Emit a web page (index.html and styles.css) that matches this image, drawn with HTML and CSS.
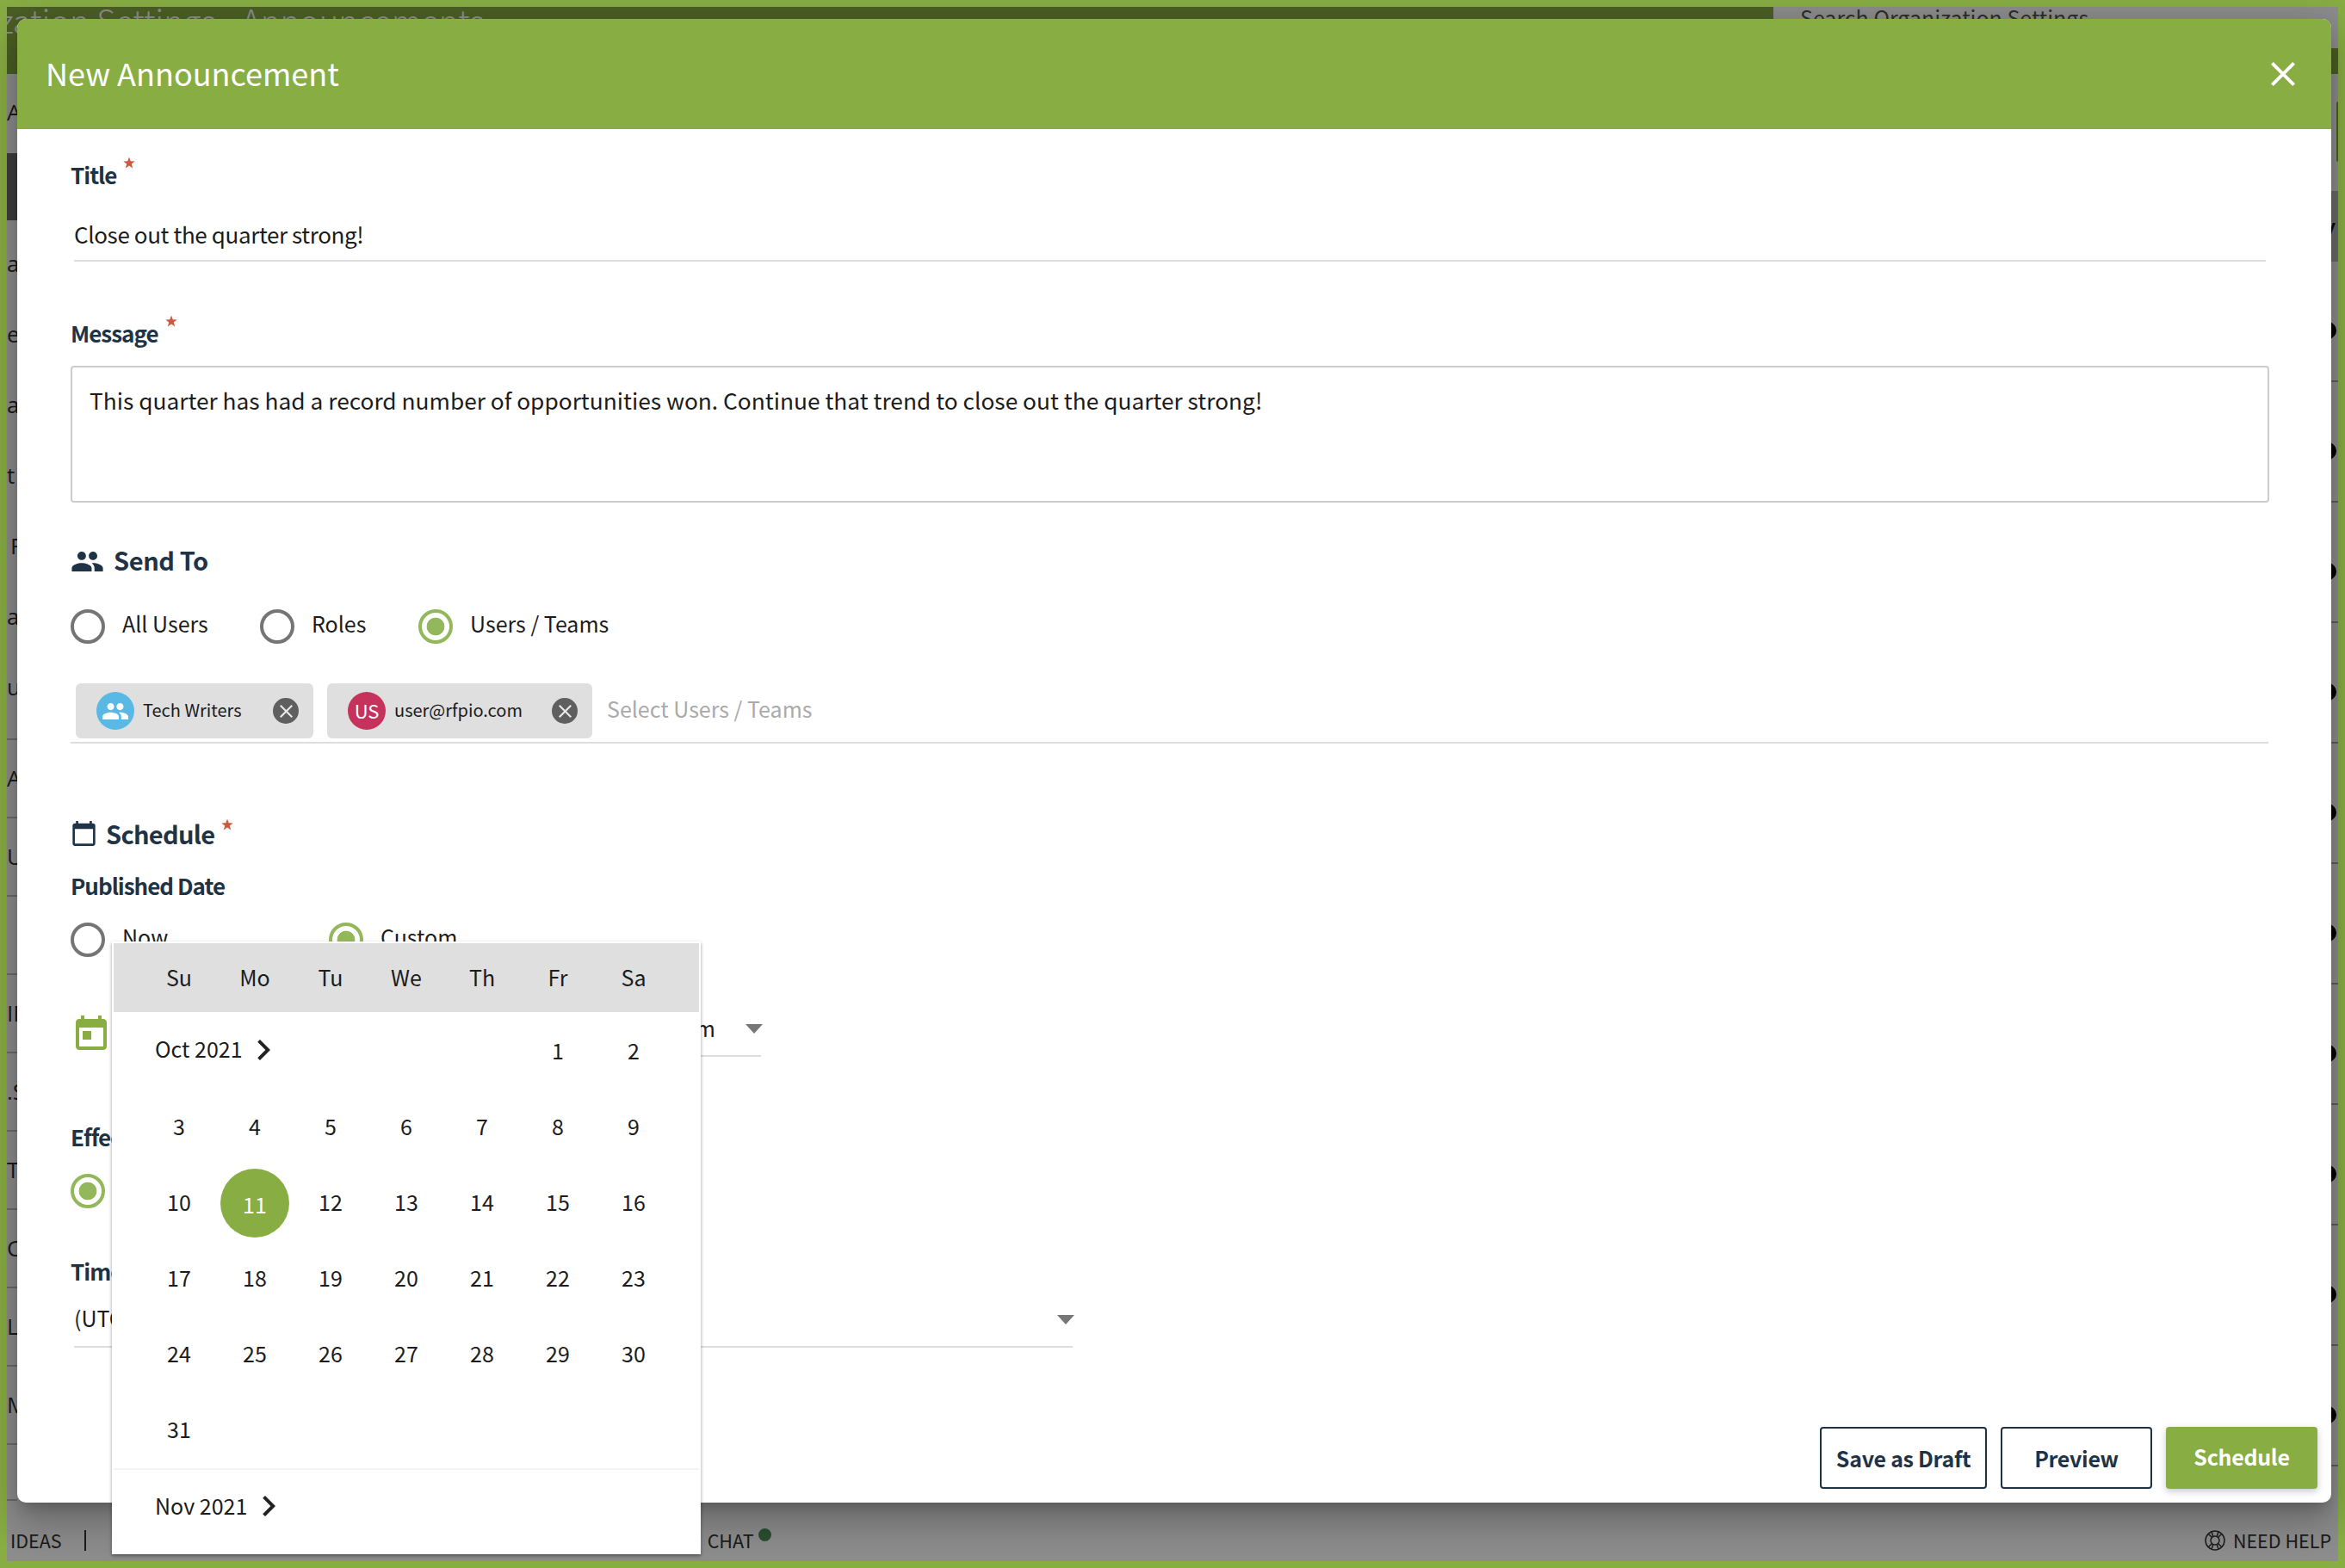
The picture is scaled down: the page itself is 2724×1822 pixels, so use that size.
FILE: index.html
```html
<!DOCTYPE html>
<html lang="en">
<head>
<meta charset="utf-8">
<title>New Announcement</title>
<link rel="stylesheet" href="styles.css">
</head>
<body>
<div class="app">
  <header class="topbar">
    <div class="page-title"><span class="page-title-text">Organization Settings - Announcements</span></div>
    <div class="search-col">
      <div class="search">Search Organization Settings</div>
      <div class="search-accent"></div>
    </div>
  </header>
  <div class="main">
    <nav class="nav">
      <div class="nav-first">A</div>
      <div class="nav-active"></div>
      <div class="nav-group">
        <div class="nav-item">ar</div>
        <div class="nav-item">e I</div>
        <div class="nav-item">ar</div>
        <div class="nav-item">t</div>
        <div class="nav-item nav-indent">F</div>
        <div class="nav-item">a</div>
        <div class="nav-item">ur</div>
      </div>
      <div class="nav-rows">
        <div class="nav-row">A</div>
        <div class="nav-row">U</div>
        <div class="nav-row"></div>
        <div class="nav-row">IF</div>
        <div class="nav-row">.S</div>
        <div class="nav-row">T</div>
        <div class="nav-row">C</div>
        <div class="nav-row">L</div>
        <div class="nav-row">M</div>
        <div class="nav-row nav-row-last"></div>
      </div>
    </nav>
    <div class="gap"></div>
    <div class="list">
      <div class="list-top"><span class="list-btn"></span></div>
      <div class="list-head">ev</div>
      <div class="list-row"><i class="dot"></i></div>
      <div class="list-row"><i class="dot"></i></div>
      <div class="list-row"><i class="dot"></i></div>
      <div class="list-row"><i class="dot"></i></div>
      <div class="list-row"><i class="dot"></i></div>
      <div class="list-row"><i class="dot"></i></div>
      <div class="list-row"><i class="dot"></i></div>
      <div class="list-row"><i class="dot"></i></div>
      <div class="list-row"><i class="dot"></i></div>
      <div class="list-row"><i class="dot"></i></div>
    </div>
  </div>
  <footer class="pagefoot">
    <span class="foot-link">IDEAS</span>
    <span class="foot-sep"></span>
    <span class="foot-gap"></span>
    <span class="foot-link">CHAT</span>
    <span class="chat-dot"></span>
    <span class="foot-fill"></span>
    <svg class="buoy" viewBox="0 0 24 24"><circle cx="12" cy="12" r="11" /><circle cx="12" cy="12" r="5" /><path d="M4.2 4.2l4.3 4.3M19.8 4.2l-4.3 4.3M4.2 19.8l4.3-4.3M19.8 19.8l-4.3-4.3M8 1.8l1.8 5.6M16 1.8l-1.8 5.6M8 22.2l1.8-5.6M16 22.2l-1.8-5.6"/></svg>
    <span class="foot-link">NEED HELP</span>
  </footer>
  <div class="scrim"></div>
</div>

<section class="modal">
  <div class="modal-head">
    <h1 class="modal-title">New Announcement</h1>
    <svg class="close" viewBox="5 5 14 14"><path d="M19 6.41L17.59 5 12 10.59 6.41 5 5 6.41 10.59 12 5 17.59 6.41 19 12 13.41 17.59 19 19 17.59 13.41 12z"/></svg>
  </div>
  <div class="modal-body">
    <div class="label label-title">Title<svg class="req" viewBox="0 0 24 24"><polygon points="12,1 15,9 23.500,9.300 16.800,14.500 19.200,23 12,18.200 4.800,23 7.200,14.500 .5,9.300 9,9"/></svg></div>
    <div class="field field-title">Close out the quarter strong!</div>

    <div class="label label-message">Message<svg class="req" viewBox="0 0 24 24"><polygon points="12,1 15,9 23.500,9.300 16.800,14.500 19.200,23 12,18.200 4.800,23 7.200,14.500 .5,9.300 9,9"/></svg></div>
    <div class="textarea">This quarter has had a record number of opportunities won. Continue that trend to close out the quarter strong!</div>

    <div class="section section-send">
      <svg class="ic-people" viewBox="1 5 22 14"><path d="M16 11c1.660 0 2.990-1.340 2.990-3S17.660 5 16 5c-1.660 0-3 1.340-3 3s1.340 3 3 3zm-8 0c1.660 0 2.990-1.340 2.990-3S9.660 5 8 5C6.340 5 5 6.340 5 8s1.340 3 3 3zm0 2c-2.330 0-7 1.170-7 3.500V19h14v-2.500c0-2.330-4.670-3.500-7-3.500zm8 0c-.29 0-.62.02-.97.05 1.160.84 1.970 1.970 1.970 3.450V19h6v-2.500c0-2.330-4.670-3.500-7-3.500z"/></svg>
      <span class="section-text">Send To</span>
    </div>
    <div class="radios radios-send">
      <label class="radio-item item-all"><i class="radio"></i><span class="radio-label">All Users</span></label>
      <label class="radio-item item-roles"><i class="radio"></i><span class="radio-label">Roles</span></label>
      <label class="radio-item"><i class="radio on"></i><span class="radio-label">Users / Teams</span></label>
    </div>
    <div class="chips">
      <div class="chip chip-team">
        <span class="avatar avatar-team"><svg class="ic-team" viewBox="1 5 22 14"><path d="M16 11c1.660 0 2.990-1.340 2.990-3S17.660 5 16 5c-1.660 0-3 1.340-3 3s1.340 3 3 3zm-8 0c1.660 0 2.990-1.340 2.990-3S9.660 5 8 5C6.340 5 5 6.340 5 8s1.340 3 3 3zm0 2c-2.330 0-7 1.170-7 3.500V19h14v-2.500c0-2.330-4.670-3.500-7-3.500zm8 0c-.29 0-.62.02-.97.05 1.160.84 1.970 1.970 1.970 3.450V19h6v-2.500c0-2.330-4.670-3.500-7-3.500z"/></svg></span>
        <span class="chip-text">Tech Writers</span>
        <span class="chip-x"><svg viewBox="5 5 14 14"><path d="M19 6.41L17.59 5 12 10.59 6.41 5 5 6.41 10.59 12 5 17.59 6.41 19 12 13.41 17.59 19 19 17.59 13.41 12z"/></svg></span>
      </div>
      <div class="chip chip-user">
        <span class="avatar avatar-user">US</span>
        <span class="chip-text">user@rfpio.com</span>
        <span class="chip-x"><svg viewBox="5 5 14 14"><path d="M19 6.41L17.59 5 12 10.59 6.41 5 5 6.41 10.59 12 5 17.59 6.41 19 12 13.41 17.59 19 19 17.59 13.41 12z"/></svg></span>
      </div>
      <span class="placeholder">Select Users / Teams</span>
    </div>

    <div class="section section-schedule">
      <svg class="ic-cal" viewBox="2 1 20 22"><path d="M20 3h-1V1h-2v2H7V1H5v2H4c-1.100 0-2 .9-2 2v16c0 1.100.9 2 2 2h16c1.100 0 2-.9 2-2V5c0-1.100-.9-2-2-2zm0 18H4V8h16v13z"/></svg>
      <span class="section-text section-text-tight">Schedule</span><svg class="req req-section" viewBox="0 0 24 24"><polygon points="12,1 15,9 23.500,9.300 16.800,14.500 19.200,23 12,18.200 4.800,23 7.200,14.500 .5,9.300 9,9"/></svg>
    </div>
    <div class="label label-published">Published Date</div>
    <div class="radios radios-date">
      <label class="radio-item item-now"><i class="radio"></i><span class="radio-label">Now</span></label>
      <label class="radio-item"><i class="radio on"></i><span class="radio-label">Custom</span></label>
    </div>
    <div class="date-row">
      <svg class="ic-today" viewBox="3 1 18 20"><path d="M19 3h-1V1h-2v2H8V1H6v2H5c-1.110 0-1.990.9-1.990 2L3 19c0 1.100.89 2 2 2h14c1.100 0 2-.9 2-2V5c0-1.100-.9-2-2-2zm0 16H5V8h14v11zM7 10h5v5H7z"/></svg>
      <div class="date-field">
        <span class="date-value">10/11/2021</span>
        <span class="time-value">12:00 pm</span>
        <i class="caret caret-time"></i>
      </div>
    </div>
    <div class="label label-effective">Effective Date</div>
    <div class="radios radios-effective">
      <label class="radio-item"><i class="radio on"></i><span class="radio-label">Immediately</span></label>
    </div>
    <div class="label label-zone">Time Zone</div>
    <div class="zone-field">
      <span class="zone-value">(UTC-08:00) Pacific Time</span>
      <i class="caret caret-zone"></i>
    </div>
  </div>
  <div class="modal-foot">
    <button class="btn btn-draft">Save as Draft</button>
    <button class="btn btn-preview">Preview</button>
    <button class="btn btn-primary">Schedule</button>
  </div>

  <div class="calendar">
    <div class="cal-week">
      <span>Su</span><span>Mo</span><span>Tu</span><span>We</span><span>Th</span><span>Fr</span><span>Sa</span>
    </div>
    <div class="cal-grid">
      <div class="cal-month">Oct 2021<svg class="chev chev-oct" viewBox="8.500 6 7.500 12"><path d="M10 6L8.590 7.410 13.170 12l-4.580 4.590L10 18l6-6z"/></svg></div>
      <span class="day-fr">1</span><span>2</span>
      <span>3</span><span>4</span><span>5</span><span>6</span><span>7</span><span>8</span><span>9</span>
      <span>10</span><span class="today"><b>11</b></span><span>12</span><span>13</span><span>14</span><span>15</span><span>16</span>
      <span>17</span><span>18</span><span>19</span><span>20</span><span>21</span><span>22</span><span>23</span>
      <span>24</span><span>25</span><span>26</span><span>27</span><span>28</span><span>29</span><span>30</span>
      <span>31</span>
    </div>
    <div class="cal-next">Nov 2021<svg class="chev chev-nov" viewBox="8.500 6 7.500 12"><path d="M10 6L8.590 7.410 13.170 12l-4.580 4.590L10 18l6-6z"/></svg></div>
  </div>
</section>
</body>
</html>
```

FILE: styles.css
```css
* { box-sizing: border-box; }
html, body { margin: 0; padding: 0; }
body {
  width: 2724px;
  height: 1822px;
  padding: 8px;
  background: #88ad43;
  font-family: "Noto Sans CJK SC", "Noto Sans", sans-serif;
  color: #1c1c1c;
  overflow: hidden;
  position: relative;
}

/* Page behind the dialog */
.app {
  position: relative;
  width: 2708px;
  height: 1806px;
  background: #fff;
  overflow: hidden;
  display: flex;
  flex-direction: column;
}
.scrim { position: absolute; inset: 0; background: rgba(0, 0, 0, .45); }

.topbar { display: flex; height: 78px; flex: none; }
.page-title { width: 2052px; background: #88ad43; overflow: hidden; }
.page-title-text {
  display: block;
  margin-left: -124px;
  margin-top: -11px;
  font-size: 38.200px;
  line-height: 52px;
  color: #fff;
  font-weight: 300;
  white-space: nowrap;
}
.search-col { flex: 1; display: flex; flex-direction: column; }
.search {
  height: 54px;
  padding-left: 31px;
  margin-top: -6px;
  font-size: 25px;
  line-height: 36px;
  color: #555;
}
.search-accent { height: 30px; background: #88ad43; }

.main { flex: 1; display: flex; min-height: 0; }
.nav { width: 12px; overflow: hidden; font-family: "Open Sans", sans-serif; font-size: 26px; color: #333; flex: none; }
.nav-first { height: 92px; line-height: 88px; white-space: nowrap; }
.nav-active { height: 78px; background: #727272; }
.nav-group { padding-top: 9px; }
.nav-item { height: 82px; line-height: 82px; white-space: nowrap; }
.nav-indent { padding-left: 4px; }
.nav-rows { margin-top: 19px; border-top: 2px solid #c4c4c4; }
.nav-row { height: 91px; line-height: 88px; border-bottom: 2px solid #c4c4c4; white-space: nowrap; }
.nav-row-last { height: 65px; }
.gap { flex: 1; }
.list { width: 8px; flex: none; position: relative; overflow: hidden; }
.list-top { height: 136px; padding-top: 32px; }
.list-btn { display: block; width: 2px; height: 70px; margin-left: 6px; background: #88ad43; border-radius: 4px 0 0 4px; }
.list-head {
  height: 82px;
  background: #c0c0c0;
  font: 600 26px/82px "Open Sans", sans-serif;
  color: #111;
  white-space: nowrap;
  text-indent: -24px;
}
.list-row { height: 140px; border-bottom: 2px solid #aaa; position: relative; }
.dot { position: absolute; left: -14px; top: 70px; width: 20px; height: 20px; border-radius: 50%; background: #000; }

.pagefoot {
  height: 70px;
  flex: none;
  display: flex;
  align-items: center;
  padding: 22px 8px 0 4px;
  font-size: 21.500px;
  color: #333;
}
.foot-link { line-height: 30px; white-space: nowrap; }
.foot-sep { width: 2px; height: 24px; background: #333; margin-left: 26px; }
.foot-gap { width: 722px; }
.chat-dot { width: 15px; height: 15px; border-radius: 50%; background: #4f8f56; margin: -14px 0 0 5px; }
.foot-fill { flex: 1; }
.buoy { width: 24px; height: 24px; margin-right: 9px; fill: none; stroke: #333; stroke-width: 1.500; }

/* Dialog */
.modal {
  position: absolute;
  left: 20px;
  top: 22px;
  width: 2688px;
  height: 1724px;
  background: #fff;
  border-radius: 10px;
  display: flex;
  flex-direction: column;
  box-shadow: 0 11px 15px -7px rgba(0,0,0,.2), 0 24px 38px 3px rgba(0,0,0,.14), 0 9px 46px 8px rgba(0,0,0,.12);
}
.modal-head {
  height: 128px;
  flex: none;
  background: #88ad43;
  border-radius: 10px 10px 0 0;
  display: flex;
  align-items: center;
  justify-content: space-between;
  padding: 0 42px 0 33px;
}
.modal-title { margin: 0; padding-bottom: 4px; font-size: 36px; font-weight: 400; line-height: 48px; color: #fff; }
.close { width: 28px; height: 28px; fill: #fff; }

.modal-body { flex: 1; padding: 34px 72px 0 62px; min-height: 0; }
.label {
  font-size: 26px;
  letter-spacing: -1px;
  font-weight: 600;
  line-height: 36px;
  padding-top: 1px;
  margin-bottom: -1px;
  color: #1f3346;
  display: flex;
  align-items: flex-start;
}
.req { width: 14px; height: 14px; fill: #cc5a41; margin-left: 8px; margin-top: -3px; flex: none; }
.field {
  margin: 32px 0 0 4px;
  font-size: 26px;
  letter-spacing: -.38px;
  line-height: 36px;
  padding: 2px 0 12px;
  border-bottom: 2px solid #ddd;
  width: 2546px;
}
.label-message { margin-top: 64px; }
.textarea {
  margin-top: 21px;
  height: 159px;
  border: 2px solid #ccc;
  border-radius: 4px;
  padding: 20px 20px 0;
  font-size: 26.300px;
  line-height: 36px;
}
.section {
  display: flex;
  align-items: center;
  height: 40px;
  font-size: 29px;
  letter-spacing: -.4px;
  font-weight: 600;
  color: #1f3346;
}
.section-text { padding-top: 3px; }
.section-text-tight { letter-spacing: -.7px; }
.section-send { margin-top: 44px; gap: 12px; }
.ic-people { width: 37px; height: 23px; fill: #1f3346; margin: 8px 0 0 1px; }
.section-schedule { margin-top: 82px; }
.ic-cal { width: 27px; height: 29px; fill: #1f3346; margin: 5px 12px 0 2px; }
.req-section { margin-top: -16px; margin-left: 8px; }

.radios { display: flex; height: 40px; }
.radios-send { margin-top: 40px; }
.radios-date { margin-top: 26px; }
.radios-effective { margin-top: 26px; }
.radio-item { display: flex; align-items: center; gap: 20px; }
.item-all { width: 220px; }
.item-roles { width: 183px; }
.item-now { width: 299px; }
.radio-label { font-size: 25px; line-height: 28px; padding-bottom: 8px; white-space: nowrap; }
.radio {
  width: 40px;
  height: 40px;
  flex: none;
  border-radius: 50%;
  border: 4px solid #757575;
  background: #fff;
}
.radio.on { border-color: #93b85c; background: radial-gradient(circle, #93b85c 0, #93b85c 10px, #fff 10.700px); }
.item-roles, .item-now { margin-right: 1px; }

.chips {
  margin-top: 46px;
  padding: 0 0 4px 6px;
  border-bottom: 2px solid #ddd;
  display: flex;
  align-items: center;
  gap: 16px;
  width: 2553px;
}
.chip {
  height: 64px;
  border-radius: 6px;
  background: #dfdfdf;
  display: flex;
  align-items: center;
  padding-left: 24px;
  flex: none;
}
.chip-team { width: 276px; }
.chip-user { width: 308px; }
.avatar {
  width: 44px;
  height: 44px;
  border-radius: 50%;
  display: flex;
  align-items: center;
  justify-content: center;
  flex: none;
}
.avatar-team { background: #5ab8e4; }
.ic-team { width: 30px; height: 19px; fill: #fff; }
.avatar-user { background: #c5335c; color: #fff; font-size: 22px; padding-bottom: 2px; }
.chip-text { margin-left: 10px; padding-bottom: 3px; font-size: 20px; line-height: 32px; color: #1c1c1c; white-space: nowrap; }
.chip-x {
  width: 30px;
  height: 30px;
  border-radius: 50%;
  background: #5f5f5f;
  display: flex;
  align-items: center;
  justify-content: center;
  margin-left: auto;
  margin-right: 17px;
}
.chip-x svg { width: 15px; height: 15px; fill: #e8e8e8; }
.placeholder { margin-left: 1px; padding-bottom: 6px; font-size: 25px; color: #aaa; white-space: nowrap; }

.label-published { margin-top: 24px; }
.date-row { margin: 48px 0 0 6px; display: flex; align-items: flex-start; height: 68px; }
.ic-today { width: 36px; height: 40px; fill: #88ad43; margin-top: 20px; flex: none; }
.date-field {
  margin-left: 16px;
  width: 744px;
  height: 68px;
  border-bottom: 2px solid #ddd;
  display: flex;
  align-items: flex-start;
  justify-content: space-between;
  padding-top: 16px;
  font-size: 25px;
  line-height: 36px;
}
.time-value { margin-left: auto; margin-right: 35px; }
.caret { width: 0; height: 0; border-style: solid; border-width: 11px 10.500px 0; border-color: #777 transparent transparent; flex: none; }
.caret-time { margin: 14px -2px 0 0; }
.label-effective { margin-top: 74px; }
.label-zone { margin-top: 54px; }
.zone-field {
  margin: 18px 0 0 4px;
  padding-top: 1px;
  width: 1160px;
  height: 54px;
  border-bottom: 2px solid #ddd;
  display: flex;
  justify-content: space-between;
  font-size: 25px;
  line-height: 36px;
}
.caret-zone { margin: 15px -2px 0 0; }

.modal-foot { flex: none; height: 88px; display: flex; justify-content: flex-end; gap: 16px; padding: 0 16px 16px 0; }
.btn {
  height: 72px;
  font: 600 25px/36px "Noto Sans CJK SC", "Noto Sans", sans-serif;
  letter-spacing: -.3px;
  border-radius: 4px;
  padding: 0;
  background: #fff;
  color: #1f3346;
  border: 2px solid #1f3346;
}
.btn-draft { width: 194px; }
.btn-preview { width: 176px; }
.btn-primary {
  width: 176px;
  background: #88ad43;
  color: #fff;
  border: none;
  padding-bottom: 4px;
  box-shadow: 0 3px 8px rgba(0,0,0,.22);
}

/* Date picker popup */
.calendar {
  position: absolute;
  left: 110px;
  top: 1072px;
  width: 684px;
  height: 712px;
  padding: 2px;
  background: #fff;
  box-shadow: 0 2px 4px rgba(0,0,0,.4);
  font-size: 25px;
  color: #1c1c1c;
}
.cal-week {
  height: 80px;
  background: #dfdfdf;
  padding: 0 0 3px 32px;
  display: grid;
  grid-template-columns: repeat(7, 88px);
  align-items: center;
  justify-items: center;
  margin-bottom: 2px;
}
.cal-grid {
  padding-left: 32px;
  display: grid;
  grid-template-columns: repeat(7, 88px);
  grid-auto-rows: 88px;
  align-items: center;
  justify-items: center;
  border-bottom: 2px solid #f4f4f4;
}
.cal-grid > span { padding-bottom: 5px; }
.cal-month {
  grid-column: 1 / span 3;
  justify-self: start;
  padding: 0 0 8px 16px;
  font-size: 25px;
  display: flex;
  align-items: center;
}
.day-fr { grid-column-start: 6; }
.chev { width: 15px; height: 24px; fill: #222; margin-top: 3px; flex: none; }
.chev-oct { margin-left: 17px; }
.chev-nov { margin-left: 18px; }
.cal-grid > .today {
  width: 80px;
  height: 80px;
  padding: 0;
  border-radius: 50%;
  background: #88ad43;
  color: #fff;
  display: flex;
  align-items: center;
  justify-content: center;
}
.today b { font-weight: 400; padding-top: 2px; }
.cal-next {
  display: flex;
  align-items: center;
  height: 84px;
  padding: 0 0 3px 48px;
  font-size: 25px;
}
```
